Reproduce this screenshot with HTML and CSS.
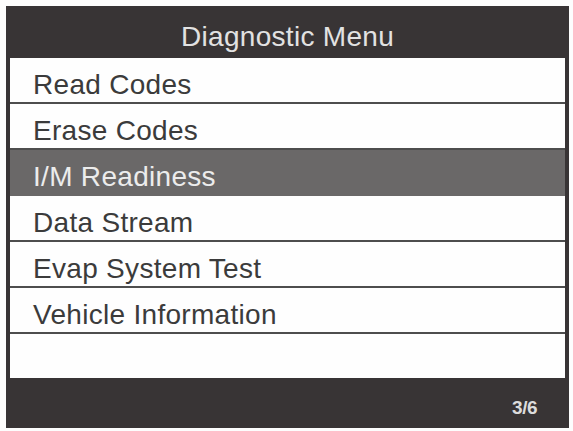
FILE: index.html
```html
<!DOCTYPE html>
<html>
<head>
<meta charset="utf-8">
<link rel="stylesheet" href="styles.css">
</head>
<body>
<div class="screen">
  <div class="title">Diagnostic Menu</div>
  <ul class="menu">
    <li class="item">Read Codes</li>
    <li class="item">Erase Codes</li>
    <li class="item selected">I/M Readiness</li>
    <li class="item">Data Stream</li>
    <li class="item">Evap System Test</li>
    <li class="item">Vehicle Information</li>
    <li class="item empty"></li>
  </ul>
  <div class="footer"><span class="page">3/6</span></div>
</div>
</body>
</html>
```
FILE: styles.css
```css
html, body {
  margin: 0;
  padding: 0;
  background: #fdfdfd;
}
body {
  font-family: "Liberation Sans", Arial, sans-serif;
}
.screen {
  margin: 6px 0 0 6px;
  width: 563px;
  height: 422px;
  background: #383435;
  padding: 0 4px;
  box-sizing: border-box;
  display: flex;
  flex-direction: column;
}
.title {
  height: 52px;
  display: flex;
  align-items: center;
  justify-content: center;
  color: #e2e2e2;
  font-size: 28px;
  letter-spacing: 0.3px;
  padding-top: 9px;
  box-sizing: border-box;
}
.menu {
  list-style: none;
  margin: 0;
  padding: 0;
  background: #fefefe;
}
.item {
  height: 46px;
  box-sizing: border-box;
  border-bottom: 2px solid #4e4e4e;
  display: flex;
  align-items: center;
  padding-left: 23px;
  padding-top: 10px;
  font-size: 28px;
  letter-spacing: 0.3px;
  color: #3b3b3b;
}
.item.selected {
  background: #6a6868;
  color: #ececec;
  border-bottom-color: #6a6868;
}
.item.empty {
  height: 44px;
  border-bottom: none;
}
.footer {
  flex: 1;
  display: flex;
  align-items: center;
  justify-content: flex-end;
  padding: 10px 28px 0 0;
  box-sizing: border-box;
}
.page {
  color: #dcdcdc;
  font-size: 19px;
  font-weight: bold;
  letter-spacing: -0.5px;
}
```
